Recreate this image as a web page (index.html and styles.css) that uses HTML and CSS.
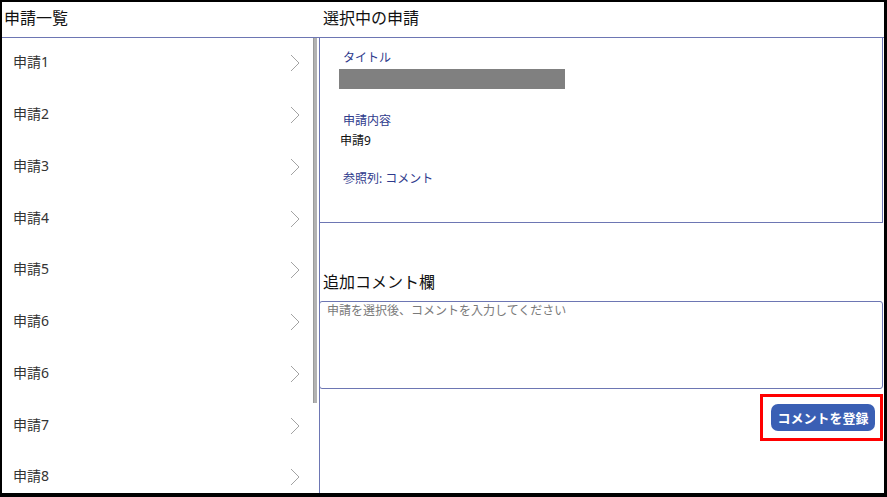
FILE: index.html
```html
<!DOCTYPE html>
<html lang="ja">
<head>
<meta charset="utf-8">
<link rel="stylesheet" href="styles.css">
</head>
<body>
<div class="frame">
  <div class="left">
    <div class="head">申請一覧</div>
    <div class="gallery">
      <div class="items">
        <div class="item"><span>申請1</span><svg class="chev" width="10" height="18" viewBox="0 0 10 18"><polyline points="1,1 9,9 1,17"/></svg></div>
        <div class="item"><span>申請2</span><svg class="chev" width="10" height="18" viewBox="0 0 10 18"><polyline points="1,1 9,9 1,17"/></svg></div>
        <div class="item"><span>申請3</span><svg class="chev" width="10" height="18" viewBox="0 0 10 18"><polyline points="1,1 9,9 1,17"/></svg></div>
        <div class="item"><span>申請4</span><svg class="chev" width="10" height="18" viewBox="0 0 10 18"><polyline points="1,1 9,9 1,17"/></svg></div>
        <div class="item"><span>申請5</span><svg class="chev" width="10" height="18" viewBox="0 0 10 18"><polyline points="1,1 9,9 1,17"/></svg></div>
        <div class="item"><span>申請6</span><svg class="chev" width="10" height="18" viewBox="0 0 10 18"><polyline points="1,1 9,9 1,17"/></svg></div>
        <div class="item"><span>申請6</span><svg class="chev" width="10" height="18" viewBox="0 0 10 18"><polyline points="1,1 9,9 1,17"/></svg></div>
        <div class="item"><span>申請7</span><svg class="chev" width="10" height="18" viewBox="0 0 10 18"><polyline points="1,1 9,9 1,17"/></svg></div>
        <div class="item"><span>申請8</span><svg class="chev" width="10" height="18" viewBox="0 0 10 18"><polyline points="1,1 9,9 1,17"/></svg></div>
      </div>
      <div class="track"><div class="thumb"></div></div>
    </div>
  </div>
  <div class="right">
    <div class="head rhead">選択中の申請</div>
    <div class="body">
      <div class="card">
        <div class="label l1">タイトル</div>
        <div class="bar"></div>
        <div class="label l2">申請内容</div>
        <div class="value">申請9</div>
        <div class="label l3">参照列: コメント</div>
      </div>
      <div class="subhead">追加コメント欄</div>
      <div class="textbox"><span class="placeholder">申請を選択後、コメントを入力してください</span></div>
      <div class="actions">
        <div class="highlight"><button class="btn">コメントを登録</button></div>
      </div>
    </div>
  </div>
</div>
</body>
</html>
```

FILE: styles.css
```css
* { box-sizing: border-box; }
html, body { margin: 0; padding: 0; background: #ffffff; }
body {
  font-family: "Noto Sans", "Noto Sans CJK JP", sans-serif;
  color: #222;
}
.frame {
  width: 887px;
  height: 497px;
  border-style: solid;
  border-color: #000;
  border-width: 2px 3px 4px 2px;
  display: grid;
  grid-template-columns: 317px 1fr;
  overflow: hidden;
  background: #fff;
}
.left, .right {
  display: flex;
  flex-direction: column;
  min-height: 0;
  overflow: hidden;
}
.head {
  height: 36px;
  flex: none;
  border-bottom: 1px solid #6d76b3;
  font-size: 16px;
  line-height: 22px;
  padding: 5px 0 0 2px;
  color: #111;
}
.rhead { padding-left: 4px; }
.gallery {
  flex: 1;
  display: flex;
  min-height: 0;
  overflow: hidden;
}
.items {
  flex: 1;
  display: flex;
  flex-direction: column;
}
.item {
  flex: none;
  height: 51.75px;
  padding: 0 13px 5px 11px;
  display: flex;
  align-items: center;
  justify-content: space-between;
  font-size: 14px;
  color: #333;
}
.chev {
  margin-top: 4px;
  fill: none;
  stroke: #a3a3a3;
  stroke-width: 1;
}
.track {
  width: 4px;
  margin-right: 2px;
  flex: none;
}
.thumb {
  width: 4px;
  height: 365px;
  background: #b2b2b2;
  border-left: 1px solid #9a9a9a;
}
.body {
  flex: 1;
  border-left: 1px solid #6d76b3;
  padding-right: 1px;
  display: flex;
  flex-direction: column;
}
.card {
  margin: -1px 0 0 -1px;
  height: 186px;
  border: 1px solid #6d76b3;
  padding: 12px 0 0 19px;
  display: flex;
  flex-direction: column;
  align-items: flex-start;
}
.label {
  font-size: 12px;
  line-height: 16px;
  color: #2e3a8c;
  margin-left: 4px;
}
.bar {
  width: 226px;
  height: 20px;
  background: #808080;
  margin-top: 3px;
}
.l2 { margin-top: 24px; }
.value {
  font-size: 12px;
  line-height: 16px;
  color: #111;
  margin-top: 4px;
  margin-left: 1px;
}
.l3 { margin-top: 22px; }
.subhead {
  margin-top: 48px;
  padding-left: 3px;
  font-size: 16px;
  line-height: 22px;
  color: #111;
}
.textbox {
  margin: 8px 0 0 -1px;
  height: 88px;
  border: 1px solid #6d76b3;
  border-radius: 3px;
  padding: 1px 7px;
  font-size: 12px;
  line-height: 16px;
}
.placeholder {
  color: #7a7a7a;
}
.actions {
  display: flex;
  justify-content: flex-end;
  margin-top: 5px;
}
.highlight {
  border: 3px solid #ff0000;
  padding: 7px 5px 7px 8px;
}
.btn {
  display: block;
  width: 104px;
  height: 27px;
  border: none;
  border-radius: 7px;
  background: #3a5fb4;
  color: #fff;
  font-family: "Noto Sans CJK JP", sans-serif;
  font-weight: 700;
  font-size: 13px;
  padding: 0;
  line-height: 27px;
}
```
